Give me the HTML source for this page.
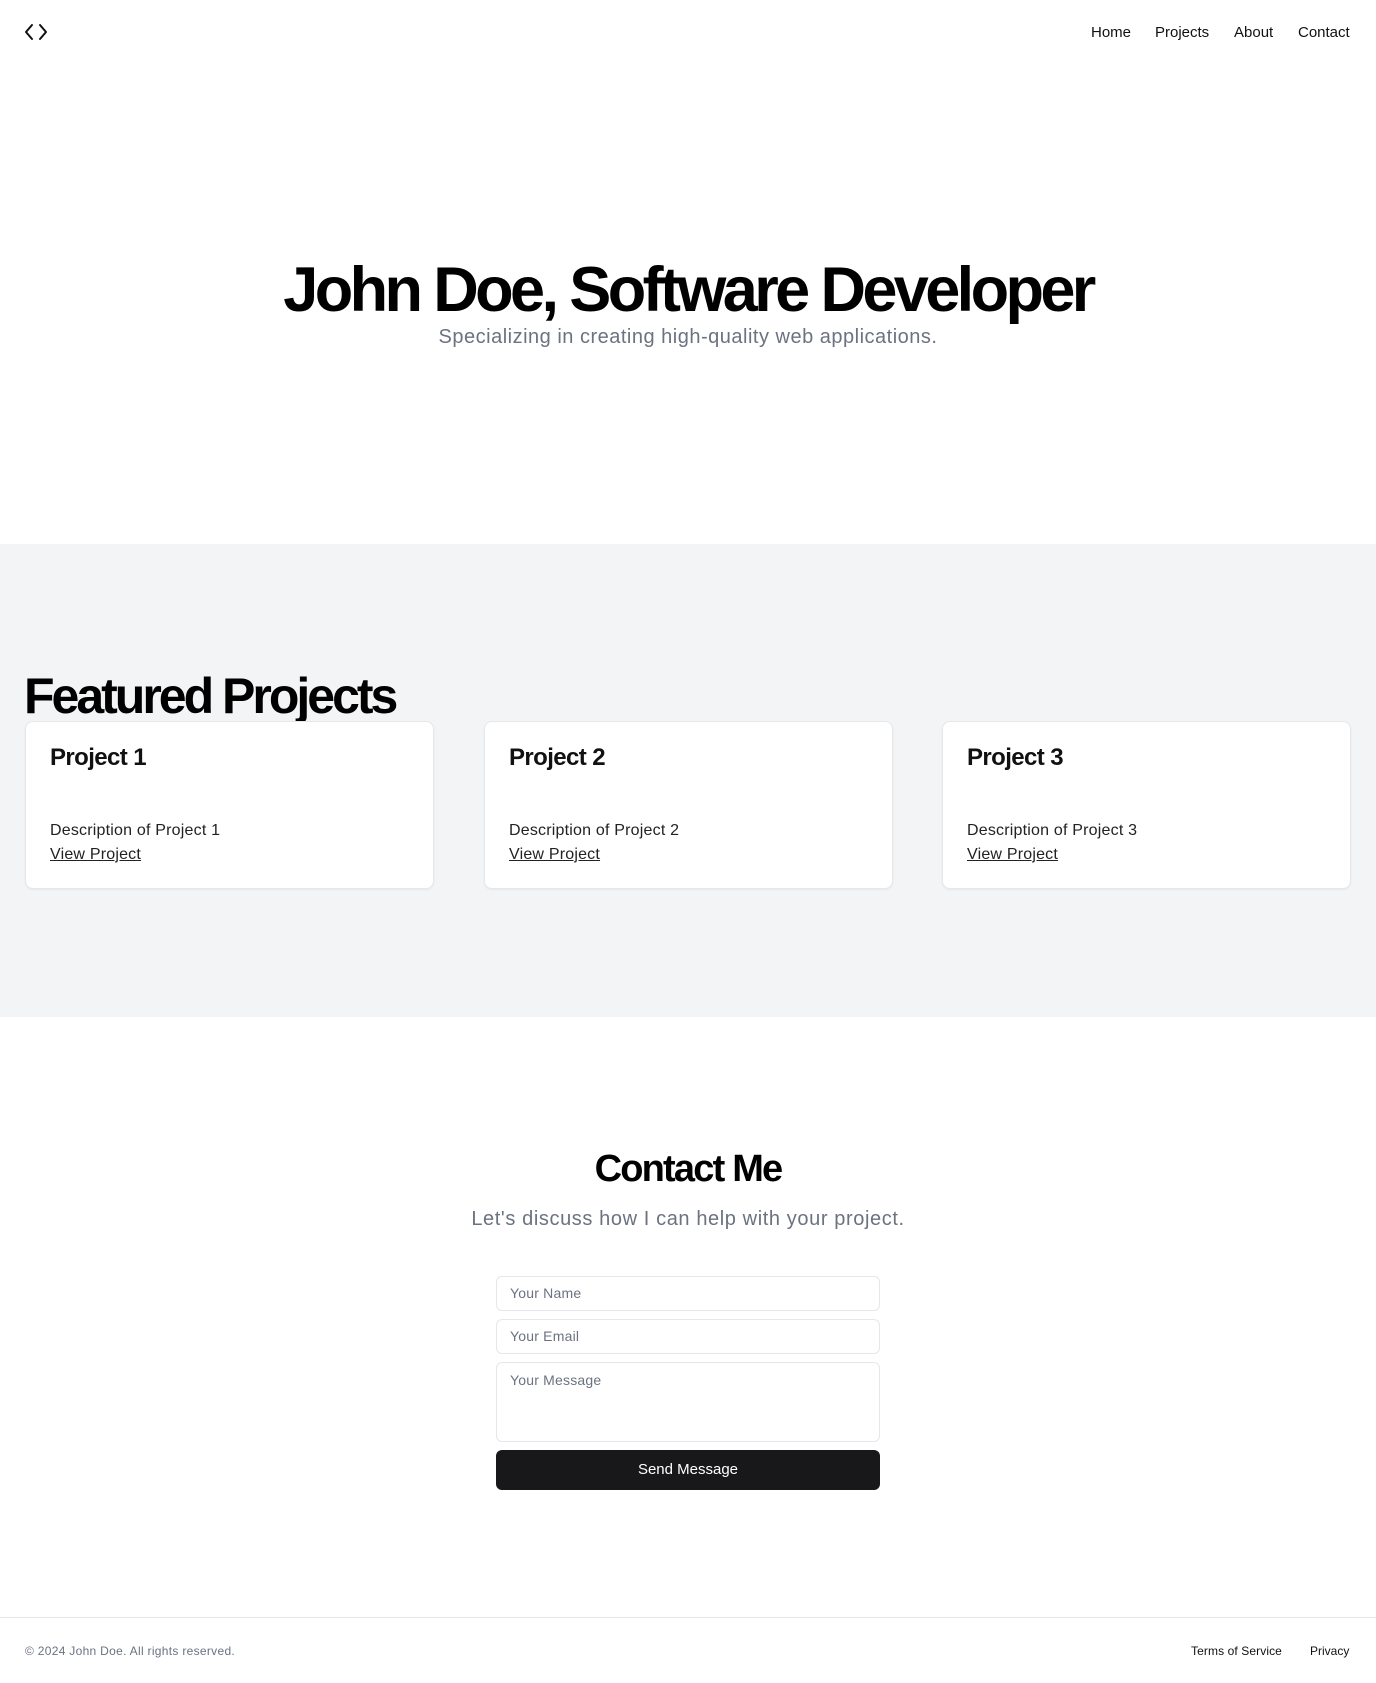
<!DOCTYPE html>
<html><head><meta charset="utf-8"><style>
*{box-sizing:border-box;margin:0;padding:0}
body{width:1376px;height:1683px;font-family:"Liberation Sans",sans-serif;color:#111;background:#fff;position:relative;overflow:hidden}
.abs{position:absolute}
nav a{position:absolute;top:24px;font-size:15px;color:#111;text-decoration:none}
h1{position:absolute;left:0;width:1376px;text-align:center;top:254px;font-size:63px;font-weight:700;letter-spacing:-3.6px;color:#000}
.sub{position:absolute;left:0;width:1376px;text-align:center;color:#6b7280}
.gray{position:absolute;left:0;top:544px;width:1376px;height:473px;background:#f3f4f6}
h2.fp{position:absolute;left:24px;top:667px;font-size:50px;font-weight:700;letter-spacing:-3px;color:#000}
.card{position:absolute;top:721px;width:409px;height:168px;background:#fff;border:1px solid #e5e7eb;border-radius:8px;box-shadow:0 1px 2px rgba(0,0,0,.05)}
.card h3{position:absolute;left:24px;top:22px;font-size:24px;font-weight:700;letter-spacing:-.6px}
.card p{position:absolute;left:24px;top:100px;font-size:16px;color:#222;letter-spacing:.2px}
.card a{position:absolute;left:24px;top:124px;font-size:16px;color:#222;text-decoration:underline;letter-spacing:.2px}
.inp{position:absolute;left:496px;width:384px;border:1px solid #e5e7eb;border-radius:6px;font-size:14px;color:#6b7280;padding-left:13px;background:#fff}
</style></head><body>
<svg class="abs" style="left:24px;top:23px" width="24" height="18" viewBox="0 0 24 18"><path d="M8 2 2 9l6 7M16 2l6 7-6 7" fill="none" stroke="#111" stroke-width="2" stroke-linecap="round" stroke-linejoin="round"/></svg>
<nav><a style="left:1091px">Home</a><a style="left:1155px">Projects</a><a style="left:1234px">About</a><a style="left:1298px">Contact</a></nav>
<h1>John Doe, Software Developer</h1>
<div class="sub" style="top:326px;font-size:20px;letter-spacing:.5px">Specializing in creating high-quality web applications.</div>
<div class="gray"></div>
<h2 class="fp">Featured Projects</h2>
<div class="card" style="left:25px"><h3>Project 1</h3><p>Description of Project 1</p><a>View Project</a></div>
<div class="card" style="left:484px"><h3>Project 2</h3><p>Description of Project 2</p><a>View Project</a></div>
<div class="card" style="left:942px"><h3>Project 3</h3><p>Description of Project 3</p><a>View Project</a></div>
<div class="abs" style="left:0;width:1376px;text-align:center;top:1148px;font-size:38px;font-weight:700;letter-spacing:-1.8px;color:#000">Contact Me</div>
<div class="sub" style="top:1208px;font-size:20px;letter-spacing:.6px">Let's discuss how I can help with your project.</div>
<div class="inp" style="top:1276px;height:35px;line-height:33px;letter-spacing:.2px">Your Name</div>
<div class="inp" style="top:1319px;height:35px;line-height:33px;letter-spacing:.2px">Your Email</div>
<div class="inp" style="top:1362px;height:80px;padding-top:9px;letter-spacing:.2px">Your Message</div>
<div class="abs" style="left:496px;top:1450px;width:384px;height:40px;background:#18181b;border-radius:6px;color:#fff;font-size:15px;text-align:center;line-height:40px">Send Message</div>
<div class="abs" style="left:0;top:1617px;width:1376px;height:1px;background:#e5e7eb"></div>
<div class="abs" style="left:25px;top:1644px;font-size:12px;color:#6b7280;letter-spacing:.3px">© 2024 John Doe. All rights reserved.</div>
<div class="abs" style="left:1191px;top:1644px;font-size:12px;color:#111;letter-spacing:.1px">Terms of Service</div>
<div class="abs" style="left:1310px;top:1644px;font-size:12px;color:#111">Privacy</div>
</body></html>
